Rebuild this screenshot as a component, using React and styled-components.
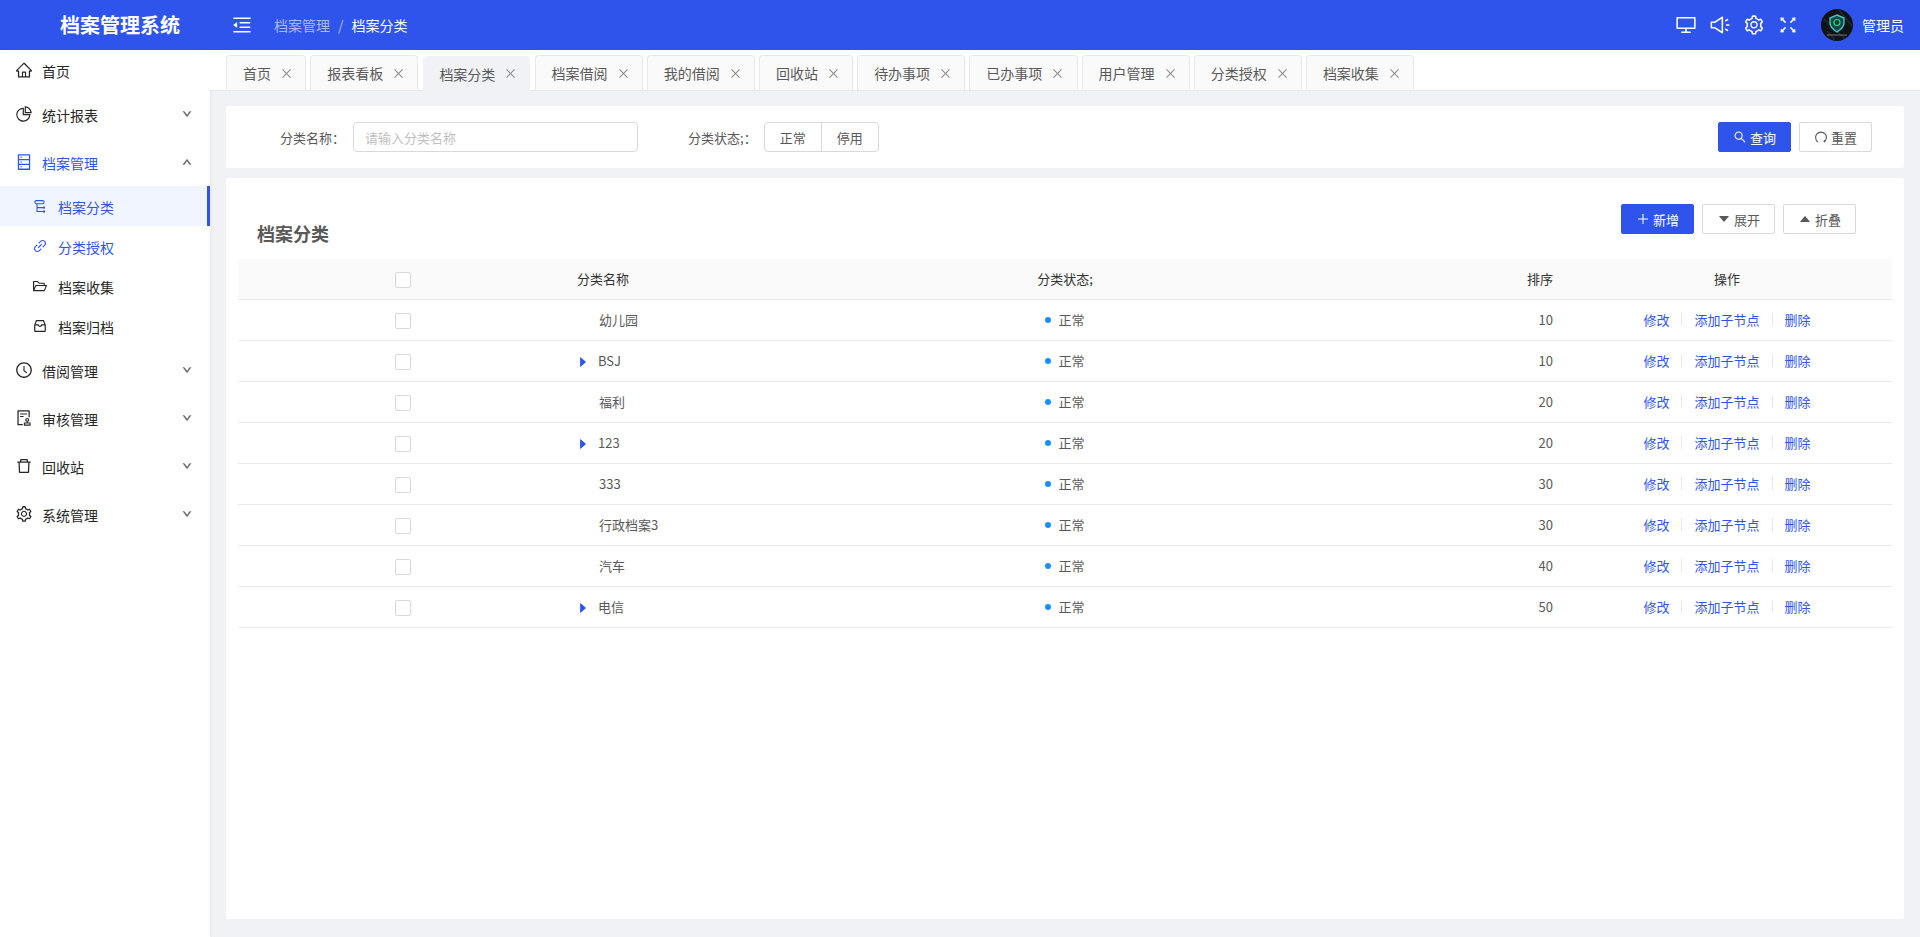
import React from 'react';
import styled, { createGlobalStyle } from 'styled-components';
import {
  AiOutlineHome, AiOutlinePieChart, AiOutlineDatabase, AiOutlineLink, AiOutlineFolderOpen, AiOutlineInbox,
  AiOutlineClockCircle, AiOutlineAudit, AiOutlineDelete, AiOutlineSetting, AiOutlineDown, AiOutlineUp,
  AiOutlineMenuFold, AiOutlineDesktop, AiOutlineSound, AiOutlineFullscreen, AiOutlineClose, AiOutlineSearch,
  AiOutlinePlus, AiFillCaretDown, AiFillCaretUp, AiFillCaretRight,
} from 'react-icons/ai';

const BLUE = '#2f54eb';
const FONT = '"Noto Sans CJK SC", "Noto Sans", sans-serif';

const Global = createGlobalStyle`
  html, body { margin: 0; padding: 0; height: 100%; background: #f0f2f5; }
  body { font-family: ${FONT}; font-size: 13px; color: #595959; overflow: hidden; }
  * { box-sizing: border-box; }
`;

const Page = styled.div`display: flex; flex-direction: column; width: 1920px; height: 937px;`;
const Header = styled.header`display: flex; align-items: center; height: 50px; flex: none; background: ${BLUE}; color: #fff;`;
const Logo = styled.div`width: 231px; padding-left: 60px; font-size: 20px; font-weight: 700; line-height: 50px; white-space: nowrap;`;
const Toggle = styled.span`display: flex; font-size: 22px; width: 43px;`;
const Crumb = styled.span`font-size: 14px; color: ${p => (p.$current ? '#fff' : 'rgba(255,255,255,.6)')};`;
const CrumbSep = styled.span`font-size: 14px; margin: 0 8px; color: rgba(255,255,255,.6);`;
const HeaderRight = styled.div`margin-left: auto; display: flex; align-items: center; padding-right: 16px;`;
const HeaderIcon = styled.span`display: flex; font-size: 22px; width: 34px; justify-content: center;`;
const Avatar = styled.span`display: flex; width: 32px; height: 32px; margin: 0 9px 0 16px; border-radius: 50%; overflow: hidden;`;
const UserName = styled.span`font-size: 14px; line-height: 20px;`;

const Body = styled.div`display: flex; flex: 1; min-height: 0;`;
const Sidebar = styled.aside`width: 210px; flex: none; background: #fff; box-shadow: 2px 0 4px rgba(0,0,0,.03);`;
const MenuItem = styled.div`
  display: flex; align-items: center; height: 40px; padding-left: ${p => (p.$sub ? 32 : 16)}px;
  margin-top: ${p => p.$top || 0}px; font-size: 14px; position: relative;
  color: ${p => (p.$active ? BLUE : '#262626')};
  background: ${p => (p.$selected ? '#f0f5ff' : 'transparent')};
  ${p => p.$selected && `&::after { content: ''; position: absolute; right: 0; top: 0; bottom: 0; width: 3px; background: ${BLUE}; }`}
`;
const MenuIcon = styled.span`display: flex; width: 26px; margin-left: ${p => (p.$sub ? 0 : -1)}px; margin-right: ${p => (p.$sub ? 0 : 1)}px; font-size: ${p => (p.$sub ? 16 : 18)}px; flex: none;`;
const MenuLabel = styled.span`flex: 1; padding-top: 2px;`;
const Chevron = styled.span`display: flex; font-size: 10px; width: 10px; margin-right: 18px; margin-top: -1px; color: #595959;
  svg { stroke: currentColor; stroke-width: 70; }`;

const Main = styled.main`flex: 1; min-width: 0; display: flex; flex-direction: column;`;
const TabBar = styled.div`display: flex; align-items: flex-end; height: 41px; flex: none; padding-left: 16px; gap: 4px; background: #fff; border-bottom: 1px solid #e8e8e8;`;
const Tab = styled.div`
  display: flex; align-items: center; padding: 0 12.2px 0 16px; font-size: 14px; white-space: nowrap;
  border: ${p => (p.$active ? '0' : '1px solid #e8e8e8')}; border-bottom: 0; border-radius: 4px 4px 0 0;
  background: ${p => (p.$active ? '#f0f2f5' : '#fafafa')}; color: #595959;
  margin: ${p => (p.$active ? '0 1px -1px' : '0')};
  height: 35px;
`;
const TabClose = styled.span`display: flex; font-size: 13px; margin-left: 9px; color: #8c8c8c;`;

const Content = styled.div`flex: 1; min-height: 0; padding: 15px 16px 18px; display: flex; flex-direction: column; gap: 10px;`;
const SearchCard = styled.div`display: flex; align-items: center; height: 62px; flex: none; padding: 0 32px 0 54px; background: #fff; border-radius: 2px;`;
const FieldLabel = styled.span`font-size: 13px; color: #595959; white-space: nowrap;`;
const Input = styled.input`
  width: 285px; height: 30px; margin-left: 8px; padding: 0 11px; border: 1px solid #d9d9d9; border-radius: 4px; font: 13px ${FONT}; outline: none;
  &::placeholder { color: #bfbfbf; }
`;
const StatusField = styled.div`display: flex; align-items: center; margin-left: 50px;`;
const RadioGroup = styled.div`display: flex; width: 115px; height: 30px; margin-left: 7px; border: 1px solid #d9d9d9; border-radius: 4px; overflow: hidden;`;
const RadioOption = styled.span`flex: 1; display: flex; align-items: center; justify-content: center; font-size: 13px; & + & { border-left: 1px solid #d9d9d9; }`;
const ButtonRow = styled.div`margin-left: auto; display: flex; gap: 8px;`;
const Button = styled.button`
  display: flex; align-items: center; justify-content: center; gap: 3px; width: 73px; height: 30px; padding: 0; border-radius: 2px; font: 13px ${FONT};
  border: 1px solid ${p => (p.$primary ? BLUE : '#d9d9d9')}; background: ${p => (p.$primary ? BLUE : '#fff')}; color: ${p => (p.$primary ? '#fff' : '#595959')};
  svg { font-size: 14px; }
`;

const TableCard = styled.section`flex: 1; min-height: 0; padding: 26px 12px 0; background: #fff; border-radius: 2px;`;
const CardHead = styled.div`display: flex; height: 55px; padding-right: 36px; justify-content: space-between;`;
const Title = styled.h2`margin: 16px 0 0 19px; font-size: 18px; line-height: 26px; font-weight: 700; color: #595959;`;
const Table = styled.table`width: 1654px; border-collapse: separate; border-spacing: 0; table-layout: fixed; font-size: 13px;`;
const Th = styled.th`
  height: 41px; padding: 0 ${p => (p.$right ? '9px' : '0')} 2px ${p => (p.$left ? '9px' : '0')}; background: #fafafa; border-bottom: 1px solid #e8e8e8;
  font-weight: 400; color: #333; text-align: ${p => (p.$right ? 'right' : p.$left ? 'left' : 'center')};
`;
const Td = styled.td`
  height: 41px; padding: 0 ${p => (p.$right ? '9px' : '0')} 2px ${p => p.$pad || 0}px; border-bottom: 1px solid #e8e8e8;
  color: #595959; text-align: ${p => (p.$right ? 'right' : p.$left ? 'left' : 'center')};
`;
const Check = styled.span`display: inline-block; width: 16px; height: 16px; border: 1px solid #d9d9d9; border-radius: 2px; background: #fff; vertical-align: middle;`;
const NameCell = styled.span`display: flex; align-items: center;`;
const Arrow = styled.span`display: flex; width: ${p => (p.$tree ? 22 : 23)}px; margin: 3px 0 0 -4px; font-size: 14px; color: ${BLUE}; flex: none;`;
const Dot = styled.i`display: inline-block; width: 6px; height: 6px; border-radius: 50%; background: #1890ff; margin-right: 7px; vertical-align: middle; position: relative; top: -1px;`;
const Actions = styled.span`display: flex; justify-content: center; align-items: center;`;
const ActionLink = styled.a`color: ${BLUE}; cursor: pointer;`;
const ActionSep = styled.i`width: 1px; height: 13px; background: #e8e8e8; margin: 0 12px;`;

const ShieldAvatar = () => (
  <svg width="32" height="32" viewBox="0 0 32 32">
    <rect width="32" height="32" fill="#101316" />
    <path d="M3 10 L24 30 M18 1 L31 17 M6 22 L14 31" stroke="#24292c" strokeWidth="1.6" />
    <path d="M16 6 L23 9 V14 C23 18 20 20.5 16 23 C12 20.5 9 18 9 14 V9 Z" fill="#14474d" stroke="#45c6c0" strokeWidth="1.4" />
    <circle cx="16" cy="13.5" r="3" fill="#10402c" stroke="#35d07a" strokeWidth="1.2" />
    <rect x="6" y="25.5" width="20" height="1" fill="#75797b" />
  </svg>
);

const TreeIcon = () => (
  <svg width="14" height="14" viewBox="0 0 14 14" fill="none" stroke="currentColor" strokeWidth="1.1" style={{ marginTop: 1 }}>
    <rect x="3" y="0.6" width="9" height="3.2" rx="1.2" />
    <path d="M5 3.8 V11.5 H11 M5 7.6 H11" />
    <rect x="11" y="6.6" width="2" height="2" fill="currentColor" stroke="none" />
    <rect x="11" y="10.5" width="2" height="2" fill="currentColor" stroke="none" />
  </svg>
);

const ResetIcon = () => (
  <svg width="1em" height="1em" viewBox="0 0 14 14" fill="none" stroke="currentColor" strokeWidth="1.1">
    <path d="M4 12 A5.4 5.4 0 1 1 10 12" />
    <path d="M10 12 L10.6 10.2" />
  </svg>
);

const menu = [
  { label: '首页', icon: <AiOutlineHome />, top: 0 },
  { label: '统计报表', icon: <AiOutlinePieChart />, chevron: 'down', top: 4 },
  { label: '档案管理', icon: <AiOutlineDatabase />, chevron: 'up', top: 8, active: true },
  { label: '档案分类', icon: <TreeIcon />, sub: true, selected: true, active: true, top: 4 },
  { label: '分类授权', icon: <AiOutlineLink />, sub: true, active: true },
  { label: '档案收集', icon: <AiOutlineFolderOpen />, sub: true },
  { label: '档案归档', icon: <AiOutlineInbox />, sub: true },
  { label: '借阅管理', icon: <AiOutlineClockCircle />, chevron: 'down', top: 4 },
  { label: '审核管理', icon: <AiOutlineAudit />, chevron: 'down', top: 8 },
  { label: '回收站', icon: <AiOutlineDelete />, chevron: 'down', top: 8 },
  { label: '系统管理', icon: <AiOutlineSetting />, chevron: 'down', top: 8 },
];
const tabs = ['首页', '报表看板', '档案分类', '档案借阅', '我的借阅', '回收站', '待办事项', '已办事项', '用户管理', '分类授权', '档案收集'];
const rows = [
  { name: '幼儿园', sort: 10 }, { name: 'BSJ', sort: 10, tree: true }, { name: '福利', sort: 20 }, { name: '123', sort: 20, tree: true },
  { name: '333', sort: 30 }, { name: '行政档案3', sort: 30 }, { name: '汽车', sort: 40 }, { name: '电信', sort: 50, tree: true },
];

export default function App() {
  return (
    <Page>
      <Global />
      <Header>
        <Logo>档案管理系统</Logo>
        <Toggle><AiOutlineMenuFold /></Toggle>
        <Crumb>档案管理</Crumb><CrumbSep>/</CrumbSep><Crumb $current>档案分类</Crumb>
        <HeaderRight>
          <HeaderIcon><AiOutlineDesktop /></HeaderIcon>
          <HeaderIcon><AiOutlineSound /></HeaderIcon>
          <HeaderIcon><AiOutlineSetting /></HeaderIcon>
          <HeaderIcon><AiOutlineFullscreen /></HeaderIcon>
          <Avatar><ShieldAvatar /></Avatar>
          <UserName>管理员</UserName>
        </HeaderRight>
      </Header>
      <Body>
        <Sidebar>
          {menu.map(m => (
            <MenuItem key={m.label} $sub={m.sub} $top={m.top} $active={m.active} $selected={m.selected}>
              <MenuIcon $sub={m.sub}>{m.icon}</MenuIcon>
              <MenuLabel>{m.label}</MenuLabel>
              {m.chevron && <Chevron>{m.chevron === 'down' ? <AiOutlineDown /> : <AiOutlineUp />}</Chevron>}
            </MenuItem>
          ))}
        </Sidebar>
        <Main>
          <TabBar>
            {tabs.map((t, i) => (
              <Tab key={t + i} $active={i === 2}>{t}<TabClose><AiOutlineClose /></TabClose></Tab>
            ))}
          </TabBar>
          <Content>
            <SearchCard>
              <FieldLabel>分类名称：</FieldLabel>
              <Input placeholder="请输入分类名称" />
              <StatusField>
                <FieldLabel>分类状态;：</FieldLabel>
                <RadioGroup><RadioOption>正常</RadioOption><RadioOption>停用</RadioOption></RadioGroup>
              </StatusField>
              <ButtonRow>
                <Button $primary><AiOutlineSearch />查询</Button>
                <Button><ResetIcon />重置</Button>
              </ButtonRow>
            </SearchCard>
            <TableCard>
              <CardHead>
                <Title>档案分类</Title>
                <ButtonRow>
                  <Button $primary><AiOutlinePlus />新增</Button>
                  <Button><AiFillCaretDown />展开</Button>
                  <Button><AiFillCaretUp />折叠</Button>
                </ButtonRow>
              </CardHead>
              <Table>
                <colgroup>
                  <col width="330" /><col width="400" /><col width="194" /><col width="400" /><col width="330" />
                </colgroup>
                <thead>
                  <tr>
                    <Th><Check /></Th>
                    <Th $left>分类名称</Th>
                    <Th>分类状态;</Th>
                    <Th $right>排序</Th>
                    <Th>操作</Th>
                  </tr>
                </thead>
                <tbody>
                  {rows.map((r, i) => (
                    <tr key={i}>
                      <Td><Check /></Td>
                      <Td $left $pad={12}>
                        <NameCell><Arrow $tree={r.tree}>{r.tree && <AiFillCaretRight />}</Arrow>{r.name}</NameCell>
                      </Td>
                      <Td><Dot />正常</Td>
                      <Td $right>{r.sort}</Td>
                      <Td>
                        <Actions>
                          <ActionLink>修改</ActionLink><ActionSep />
                          <ActionLink>添加子节点</ActionLink><ActionSep />
                          <ActionLink>删除</ActionLink>
                        </Actions>
                      </Td>
                    </tr>
                  ))}
                </tbody>
              </Table>
            </TableCard>
          </Content>
        </Main>
      </Body>
    </Page>
  );
}
